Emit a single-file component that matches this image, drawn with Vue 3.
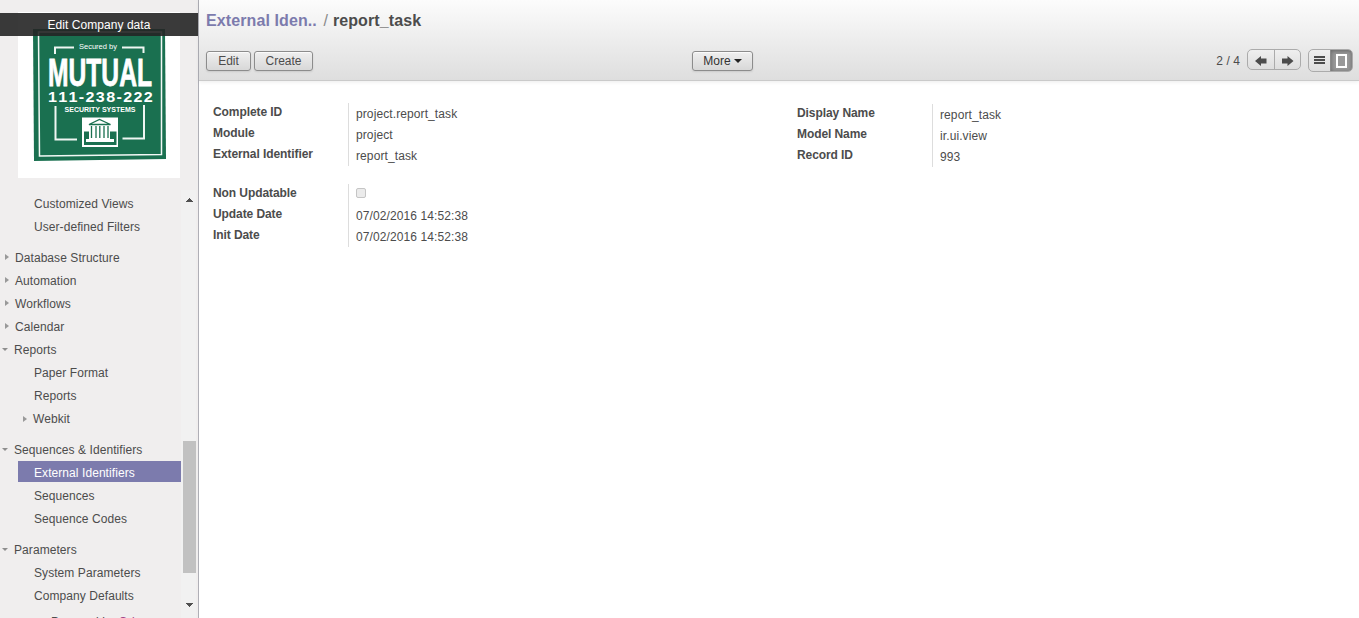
<script setup>
const menu = [
  { t: 'Customized Views', k: 'leaf' },
  { t: 'User-defined Filters', k: 'leaf' },
  { t: 'Database Structure', k: 'closed', gap: true },
  { t: 'Automation', k: 'closed' },
  { t: 'Workflows', k: 'closed' },
  { t: 'Calendar', k: 'closed' },
  { t: 'Reports', k: 'open' },
  { t: 'Paper Format', k: 'leaf' },
  { t: 'Reports', k: 'leaf' },
  { t: 'Webkit', k: 'subclosed' },
  { t: 'Sequences & Identifiers', k: 'open', gap: true },
  { t: 'External Identifiers', k: 'leaf', active: true },
  { t: 'Sequences', k: 'leaf' },
  { t: 'Sequence Codes', k: 'leaf' },
  { t: 'Parameters', k: 'open', gap: true },
  { t: 'System Parameters', k: 'leaf' },
  { t: 'Company Defaults', k: 'leaf' }
]
const groups = [
  { cls: 'g1', rows: [['Complete ID', 'project.report_task'], ['Module', 'project'], ['External Identifier', 'report_task']] },
  { cls: 'g2', rows: [['Display Name', 'report_task'], ['Model Name', 'ir.ui.view'], ['Record ID', '993']] },
  { cls: 'g3', rows: [['Non Updatable', null], ['Update Date', '07/02/2016 14:52:38'], ['Init Date', '07/02/2016 14:52:38']] }
]
</script>

<template>
  <div class="app">
    <aside class="side">
      <div class="logo">
        <svg width="162" height="166" viewBox="18 12 162 166" font-family="Liberation Sans, Arial, sans-serif" fill="#fff" text-anchor="middle">
          <rect x="18" y="12" width="162" height="166" />
          <path d="M33 29H165L166 159L34 161Z" fill="#1a7050" />
          <path d="M38.500 32H161.500V154.500L39.500 156Z" fill="none" stroke="#f2f8f5" stroke-width="1.500" />
          <path d="M55 54V47.500H74M122 47.500H143.500V53M55.500 106V139.500H77M122.500 138.500H144V105" fill="none" stroke="#eef6f2" stroke-width="2" />
          <text x="98" y="49" font-size="7" textLength="38" lengthAdjust="spacingAndGlyphs">Secured by</text>
          <text x="100" y="85.500" font-size="38" font-weight="bold" stroke="#fff" stroke-width="0.800" textLength="104" lengthAdjust="spacingAndGlyphs">MUTUAL</text>
          <text class="phone" x="101" y="101.500" font-size="14.500" font-weight="bold" textLength="106" lengthAdjust="spacingAndGlyphs">111-238-222</text>
          <text x="100" y="112" font-size="7" font-weight="bold" textLength="71" lengthAdjust="spacingAndGlyphs">SECURITY SYSTEMS</text>
          <rect x="82" y="117.500" width="36" height="29.500" />
          <path d="M84 131.500H116.500V145H84Z" fill="#1a7050" />
          <path d="M89 124.500H110V139H114V142H86V139H89Z" />
          <path d="M89 124.500L99.500 119.500L110.500 124.500ZM91.500 126V138M96 126V138M99.800 126V138M104 126V138M108 126V138" fill="#fff" stroke="#1a7050" stroke-width="1.300" />
        </svg>
        <div class="edit-company">Edit Company data</div>
      </div>
      <div class="menu-wrap">
        <nav class="menu">
          <div v-for="(m, i) in menu" :key="i" class="item" :class="[m.k, { gap: m.gap, active: m.active }]">
            <i v-if="m.k !== 'leaf'" class="caret"></i><span>{{ m.t }}</span>
          </div>
          <div class="powered">Powered by <b>Odoo</b></div>
        </nav>
        <div class="scroll">
          <svg width="9" height="5" viewBox="0 0 9 5" shape-rendering="crispEdges"><path d="M4 0h1v1h1v1h1v1h1v1H1V3h1V2h1V1h1z" fill="#505050" /></svg>
          <div class="thumb"></div>
          <svg width="9" height="5" viewBox="0 0 9 5" shape-rendering="crispEdges"><path d="M1 0h7v1H7v1H6v1H5v1H4V3H3V2H2V1H1z" fill="#505050" /></svg>
        </div>
      </div>
    </aside>
    <main class="main">
      <header class="head">
        <h1><a>External Iden..</a><em>/</em><span>report_task</span></h1>
        <div class="bar">
          <div class="left"><button class="btn edit">Edit</button><button class="btn create">Create</button></div>
          <button class="btn more">More<i></i></button>
          <div class="right">
            <span class="count">2 / 4</span>
            <div class="pager">
              <span><svg width="12" height="10" viewBox="0 0 12 10"><path d="M0 5L6 0V2.500H11.500V7.500H6V10Z" fill="#4c4c4c" /></svg></span>
              <span><svg width="12" height="10" viewBox="0 0 12 10"><path d="M11.500 5L5.500 0V2.500H0V7.500H5.500V10Z" fill="#4c4c4c" /></svg></span>
            </div>
            <div class="views">
              <span><svg width="11" height="9" viewBox="0 0 11 9"><path d="M0 0H11V2H0ZM0 3H11V5H0ZM0 6H11V8H0Z" fill="#4c4c4c" /></svg></span>
              <span class="on"><svg width="13" height="16" viewBox="0 0 13 16"><rect x="2" y="2" width="9" height="12" fill="none" stroke="#fff" stroke-width="2" /></svg></span>
            </div>
          </div>
        </div>
      </header>
      <section class="form">
        <div v-for="g in groups" :key="g.cls" class="group" :class="g.cls">
          <div class="labels"><div v-for="r in g.rows" :key="r[0]">{{ r[0] }}</div></div>
          <div class="values"><div v-for="r in g.rows" :key="r[0]"><i v-if="r[1] === null" class="check"></i><template v-else>{{ r[1] }}</template></div></div>
        </div>
      </section>
    </main>
  </div>
</template>

<style>
body { margin: 0; overflow: hidden; background: #fff; }
</style>

<style scoped>
* { box-sizing: border-box; }
.app { display: flex; width: 1359px; height: 618px; overflow: hidden; font: 12px "Liberation Sans", Arial, sans-serif; letter-spacing: 0.07px; color: #4c4c4c; }
svg { display: block; }
.logo svg { letter-spacing: 0; }
.logo .phone { letter-spacing: 1.2px; font-kerning: none; }
.side { width: 199px; height: 618px; background: #f0eeee; border-right: 1px solid #afafb6; display: flex; flex-direction: column; flex: none; }
.logo { height: 190px; padding: 12px 0 0 18px; position: relative; flex: none; }
.edit-company { position: absolute; left: 0; top: 13px; width: 198px; height: 23px; line-height: 24px; text-align: center; font-size: 12px; letter-spacing: 0.05px; color: #fff; background: rgba(37, 37, 37, 0.9); }
.menu-wrap { display: flex; height: 428px; }
.menu { width: 181px; padding-top: 2px; overflow: hidden; flex: none; }
.item { height: 21px; line-height: 21px; margin-bottom: 2px; white-space: nowrap; display: flex; align-items: center; }
.item span { padding-top: 3px; }
.gap { margin-top: 10px; }
.leaf { margin-left: 18px; padding-left: 16px; }
.active { background: #7c7bad; color: #fff; }
.caret { width: 0; height: 0; flex: none; }
.closed .caret, .subclosed .caret { border: 3px solid transparent; border-left: 4px solid #999; border-right: 0; margin: 0 6px 0 5px; }
.subclosed .caret { margin: 2px 6px 0 23px; }
.open .caret { border: 3px solid transparent; border-top-color: #8e8e8e; border-bottom: 0; margin: 2px 6px 0 2px; }
.powered { padding: 4px 0 0 51px; line-height: 22px; white-space: nowrap; }
.powered b { color: #a24689; font-weight: normal; }
.scroll { width: 15px; margin: 0 2px 0 0; background: #f1f1f1; display: flex; flex-direction: column; align-items: flex-start; padding: 8px 0 0 4px; }
.thumb { width: 13px; height: 132px; background: #c1c1c1; margin: 238px 0 30px -2px; flex: none; }
.main { flex: 1; min-width: 0; }
.head { height: 81px; border-bottom: 1px solid #cacaca; background: linear-gradient(#fcfcfc, #dedede); box-shadow: 0 1px 4px rgba(0, 0, 0, 0.08); padding: 11px 6px 0 7px; }
h1 { margin: 0; font-size: 16px; line-height: 20px; letter-spacing: 0.1px; display: flex; }
h1 a { color: #7c7bad; }
h1 em { font-style: normal; font-weight: normal; color: #8a8a8a; margin: 0 5px 0 6.5px; }
.bar { display: grid; grid-template-columns: 486px 61px 1fr; margin-top: 18px; align-items: start; }
.left { display: flex; gap: 3px; padding-top: 2px; }
.btn { height: 20px; margin: 0; padding: 0; border: 1px solid #8c8c8c; border-radius: 3px; background: linear-gradient(#efefef, #d8d8d8); box-shadow: 0 1px 2px rgba(0, 0, 0, 0.1), inset 0 1px 1px rgba(255, 255, 255, 0.8); font: 12px "Liberation Sans", Arial, sans-serif; color: #4c4c4c; display: flex; align-items: center; justify-content: center; }
.edit { width: 45px; }
.create { width: 59px; }
.more { width: 61px; margin-top: 2px; color: #333; }
.more i { border: 4px solid transparent; border-top-color: #222; border-bottom: 0; margin-left: 3px; }
.right { display: flex; justify-content: flex-end; }
.count { line-height: 24px; margin-right: 7px; }
.pager, .views { display: flex; border: 1px solid #ababab; border-radius: 5px; background: linear-gradient(#efefef, #dedede); }
.pager { width: 54px; height: 21px; margin-right: 7px; }
.pager span { width: 26px; display: flex; align-items: center; justify-content: center; padding-top: 3px; }
.pager span + span { border-left: 1px solid #ababab; }
.views { width: 45px; height: 23px; overflow: hidden; }
.views span { width: 21px; display: flex; align-items: center; justify-content: center; }
.views .on { width: 22px; border-left: 1px solid #8a8a8a; background: #999; box-shadow: inset 0 1px 4px rgba(0, 0, 0, 0.35); }
.form { display: grid; grid-template-columns: 584px 1fr; padding: 22px 0 0 14px; }
.group { display: flex; height: 63px; }
.g2 { margin-top: 1px; }
.g3 { margin-top: 17px; }
.labels { width: 135px; font-weight: bold; line-height: 21px; margin-top: -1px; letter-spacing: -0.08px; }
.values { border-left: 1px solid #ddd; padding: 1px 0 0 7px; line-height: 21px; letter-spacing: 0.1px; }
.values div { height: 21px; }
.check { display: block; width: 10px; height: 10px; border: 1px solid #c5c5c5; border-radius: 2px; background: #ebebeb; transform: translateY(3px); }
</style>
